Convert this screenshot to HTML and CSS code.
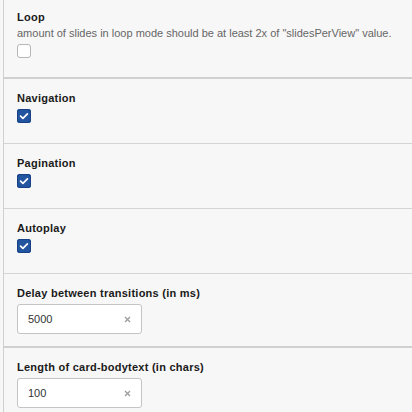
FILE: index.html
```html
<!DOCTYPE html>
<html>
<head>
<meta charset="utf-8">
<link rel="stylesheet" href="styles.css">
</head>
<body>
<div class="form">
  <div class="section section-first">
    <label class="label">Loop</label>
    <div class="desc">amount of slides in loop mode should be at least 2x of "slidesPerView" value.</div>
    <span class="check"></span>
  </div>
  <div class="section section-thick">
    <label class="label">Navigation</label>
    <span class="check checked"><svg viewBox="0 0 14 14" width="14" height="14"><path d="M3.6 7.2 L5.9 9.4 L10.4 4.8" fill="none" stroke="#fff" stroke-width="1.7" stroke-linecap="round" stroke-linejoin="round"/></svg></span>
  </div>
  <div class="section">
    <label class="label">Pagination</label>
    <span class="check checked"><svg viewBox="0 0 14 14" width="14" height="14"><path d="M3.6 7.2 L5.9 9.4 L10.4 4.8" fill="none" stroke="#fff" stroke-width="1.7" stroke-linecap="round" stroke-linejoin="round"/></svg></span>
  </div>
  <div class="section">
    <label class="label">Autoplay</label>
    <span class="check checked"><svg viewBox="0 0 14 14" width="14" height="14"><path d="M3.6 7.2 L5.9 9.4 L10.4 4.8" fill="none" stroke="#fff" stroke-width="1.7" stroke-linecap="round" stroke-linejoin="round"/></svg></span>
  </div>
  <div class="section">
    <label class="label">Delay between transitions (in ms)</label>
    <div class="input"><span class="value">5000</span><svg class="clear" viewBox="0 0 7 7" width="7" height="7"><path d="M1 1 L6 6 M6 1 L1 6" stroke="#9a9a9a" stroke-width="1.2"/></svg></div>
  </div>
  <div class="section section-thick">
    <label class="label">Length of card-bodytext (in chars)</label>
    <div class="input"><span class="value">100</span><svg class="clear" viewBox="0 0 7 7" width="7" height="7"><path d="M1 1 L6 6 M6 1 L1 6" stroke="#9a9a9a" stroke-width="1.2"/></svg></div>
  </div>
</div>
</body>
</html>
```
FILE: styles.css
```css
html, body {
  margin: 0;
  padding: 0;
  background: #f7f7f7;
}
body {
  font-family: "Liberation Sans", Arial, sans-serif;
  font-size: 11px;
  color: #222;
  height: 412px;
  overflow: hidden;
}
.form {
  margin-left: 3px;
  border-left: 1px solid #cfcfcf;
  min-height: 412px;
}
.section {
  display: flex;
  flex-direction: column;
  align-items: flex-start;
  padding: 12px 13px 20px;
  border-top: 1px solid #d4d4d4;
}
.section-first {
  border-top: none;
  padding-top: 10px;
  padding-bottom: 19px;
}
.section-thick {
  border-top: 2px solid #d0d0d0;
}
.label {
  display: block;
  font-weight: bold;
  line-height: 15px;
  letter-spacing: 0.25px;
  color: #1a1a1a;
}
.desc {
  line-height: 16px;
  color: #666;
}
.check {
  display: block;
  box-sizing: border-box;
  width: 14px;
  height: 14px;
  margin-top: 3px;
  border: 1px solid #b5b5b5;
  border-radius: 3px;
  background: #fff;
}
.check.checked {
  border: none;
  background: #22549f;
  box-shadow: inset 0 0 0 1px #174186;
}
.check svg {
  display: block;
}
.section .input {
  box-sizing: border-box;
  width: 125px;
  height: 30px;
  margin-top: 3px;
  margin-bottom: -8px;
  display: flex;
  align-items: center;
  justify-content: space-between;
  padding: 0 10px 0 10px;
  background: #fff;
  border: 1px solid #c4c4c4;
  border-radius: 3px;
  color: #333;
}
.value {
  font-size: 11px;
}
.clear {
  display: block;
}
```
